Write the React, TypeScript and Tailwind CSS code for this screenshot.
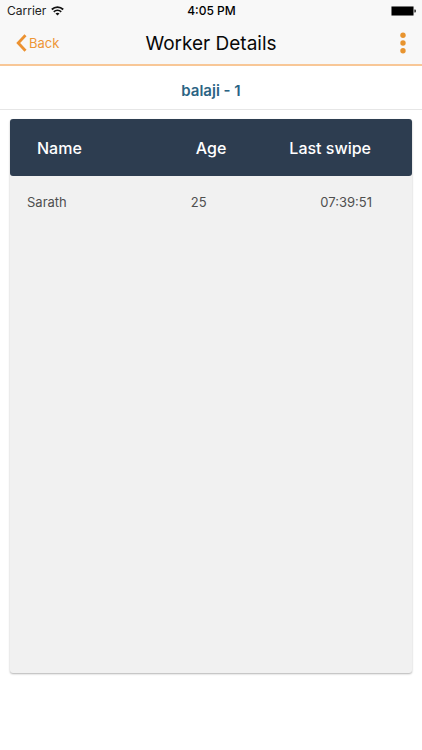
import React from 'react'

interface Worker {
  name: string
  age: number
  lastSwipe: string
}

const workers: Worker[] = [{ name: 'Sarath', age: 25, lastSwipe: '07:39:51' }]

const StatusBar: React.FC = () => (
  <div className="grid grid-cols-[1fr_auto_1fr] items-center h-[22px] pl-[7px] pr-[6px] text-[12px] leading-[22px] text-black">
    <div className="flex items-center gap-[5px]">
      <span className="text-[#222222]">Carrier</span>
      <svg width="13" height="10" viewBox="0 0 13 10" fill="none" aria-hidden="true">
        <path d="M0.8 3.5C4 .3 9 .3 12.2 3.5" stroke="#111111" strokeWidth="1.8" />
        <path d="M2.8 5.8C4.9 3.7 8.1 3.7 10.2 5.8" stroke="#111111" strokeWidth="1.7" />
        <path d="M4.5 7.5C5.6 6.4 7.4 6.4 8.5 7.5L6.5 9.6Z" fill="#111111" />
      </svg>
    </div>
    <span className="text-center font-medium">4:05 PM</span>
    <svg className="justify-self-end" width="25" height="10" viewBox="0 0 25 10" aria-hidden="true">
      <rect x="0.5" y="0.5" width="22" height="9" rx="0.8" fill="#000000" stroke="#777777" />
      <path d="M23.3 3.5h.7c.6 0 1 .6 1 1.5s-.4 1.5-1 1.5h-.7z" fill="#333333" />
    </svg>
  </div>
)

const NavBar: React.FC = () => (
  <div className="grid grid-cols-[1fr_auto_1fr] items-center h-[42px] px-4">
    <button type="button" className="flex items-center gap-[2px] justify-self-start text-[13px] leading-[18px] text-[#ee9636]">
      <svg width="11" height="18" viewBox="0 0 11 18" fill="none" aria-hidden="true">
        <path d="M9.5 1.2L2.2 9L9.5 16.8" stroke="#ec9231" strokeWidth="2.8" />
      </svg>
      Back
    </button>
    <h1 className="pt-[2px] text-[19px] leading-6 font-normal text-[#080808]">Worker Details</h1>
    <button type="button" aria-label="More options" className="justify-self-end">
      <svg width="6" height="22" viewBox="0 0 6 22" fill="#e8942f" aria-hidden="true">
        <circle cx="3" cy="3.3" r="2.7" />
        <circle cx="3" cy="11" r="2.7" />
        <circle cx="3" cy="18.7" r="2.7" />
      </svg>
    </button>
  </div>
)

const App: React.FC = () => {
  return (
    <div className="flex flex-col min-h-screen bg-white font-['Inter','Liberation_Sans',sans-serif]">
      <header className="bg-[#f8f8f8] border-b-2 border-[#f8c797]">
        <StatusBar />
        <NavBar />
      </header>

      <h2 className="pt-4 pb-[9px] text-center text-[15px] leading-[18px] font-semibold text-[#2b6484] border-b border-[#e6e6e6]">
        balaji - 1
      </h2>

      <main className="flex flex-col flex-1 px-[10px] pt-[9px] pb-[77px]">
        <div className="flex-1 rounded-[3px] bg-[#f1f1f1] shadow-[0_1px_2px_rgba(0,0,0,0.3)]">
          <table className="w-full table-fixed border-separate border-spacing-0">
            <thead>
              <tr className="h-[57px] text-[16px] leading-6 text-white">
                <th scope="col" className="w-2/5 pl-[27px] text-left font-medium rounded-l-[3px] bg-[#2d3d50]">
                  Name
                </th>
                <th scope="col" className="w-1/5 pl-[25px] text-left font-medium bg-[#2d3d50]">
                  Age
                </th>
                <th scope="col" className="w-2/5 pr-[41px] text-right font-medium rounded-r-[3px] bg-[#2d3d50]">
                  Last swipe
                </th>
              </tr>
            </thead>
            <tbody>
              {workers.map((worker) => (
                <tr key={worker.name} className="h-[52px] text-[13px] leading-5 text-[#4f4f4f]">
                  <td className="pl-[17px]">{worker.name}</td>
                  <td className="pl-[20px]">{worker.age}</td>
                  <td className="pr-[40px] text-right">{worker.lastSwipe}</td>
                </tr>
              ))}
            </tbody>
          </table>
        </div>
      </main>
    </div>
  )
}

export default App
